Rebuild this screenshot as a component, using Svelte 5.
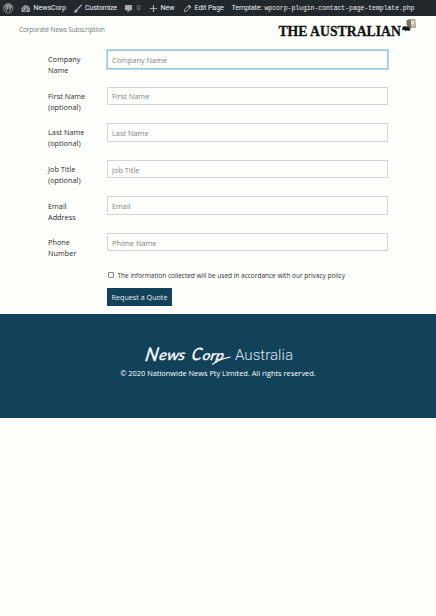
<script>
  const fields = [
    { label: ['Company', 'Name'], hint: 'Company Name', active: true },
    { label: ['First Name', '(optional)'], hint: 'First Name' },
    { label: ['Last Name', '(optional)'], hint: 'Last Name' },
    { label: ['Job Title', '(optional)'], hint: 'Job Title' },
    { label: ['Email', 'Address'], hint: 'Email' },
    { label: ['Phone', 'Number'], hint: 'Phone Name' }
  ];
</script>

<div class="page">
  <nav class="admin">
    <svg class="wp" viewBox="0 0 20 20" width="10.5" height="10.5">
      <circle cx="10" cy="10" r="9" fill="none" stroke="#a6abb0" stroke-width="1.4" />
      <path d="M2.8 7 L7 17.2 L10.2 9 L13.2 17 L16.8 6.5 C15.5 3.8 13 2.4 10 2.4 C7 2.4 4.5 3.8 3.2 6 Z" fill="#a6abb0" />
      <path d="M3.5 6.5h3.6M8.8 6.5h4M5.6 7l3.3 9.5M11 7l3.2 9" stroke="#23282d" stroke-width="1.3" />
    </svg>
    <a class="site" href="#site">
      <svg viewBox="0 0 20 20" width="9.5" height="9.5">
        <path d="M2.5 17 A9 9 0 1 1 17.5 17 Z" fill="#a6abb0" />
        <path d="M9.5 14 L14 7" stroke="#23282d" stroke-width="2" />
        <g fill="#23282d"><circle cx="4.5" cy="12" r="1.3" /><circle cx="6" cy="8" r="1.3" /><circle cx="10" cy="5.8" r="1.3" /><circle cx="15.7" cy="12" r="1.3" /><circle cx="9.5" cy="14" r="2" /></g>
      </svg>
      <span>NewsCorp</span>
    </a>
    <a class="customize" href="#customize">
      <svg viewBox="0 0 20 20" width="9.5" height="9.5" fill="#a6abb0">
        <path d="M18.6 1.2 C19.4 2 18.8 3.2 17.8 4.4 L11.2 11.8 L8.6 9.4 L15.6 2.4 C16.8 1.2 17.9 .6 18.6 1.2Z" />
        <path d="M7.8 10.4 L10.2 12.7 C10.5 16.5 7 19 1 18 C4.2 16.8 3 11 7.8 10.4Z" />
      </svg>
      <span>Customize</span>
    </a>
    <a class="comments" href="#comments">
      <svg viewBox="0 0 20 20" width="9" height="9"><path d="M4 2h12q2 0 2 2v8q0 2-2 2h-3l-5 5v-5H4q-2 0-2-2V4q0-2 2-2Z" fill="#a6abb0" /></svg>
      <span>0</span>
    </a>
    <a class="new" href="#new">
      <svg viewBox="0 0 20 20" width="9" height="9"><path d="M10 2v16M2 10h16" stroke="#a6abb0" stroke-width="2.6" /></svg>
      <span>New</span>
    </a>
    <a class="edit" href="#edit">
      <svg viewBox="0 0 20 20" width="9" height="9"><path d="M3 17l1.3-5.4L13.5 2.4l4.1 4.1-9.2 9.2ZM11 5l4 4" fill="none" stroke="#a6abb0" stroke-width="2" /><path d="M13.5 2.4l4.1 4.1-2.3 2.3-4.1-4.1Z" fill="#a6abb0" /></svg>
      <span>Edit Page</span>
    </a>
    <span class="tpl">Template:</span>
    <code>wpcorp-plugin-contact-page-template.php</code>
  </nav>

  <header>
    <span class="tag">Corporate News Subscription</span>
    <svg class="brand" viewBox="0 0 142 24" width="142" height="24">
      <text x="2.4" y="17.8" textLength="122.5" lengthAdjust="spacingAndGlyphs">THE AUSTRALIAN</text>
      <path d="M132.5 1.5h6.5l.5 8h-7Z" fill="#c9c7a4" stroke="#777a70" stroke-width=".6" />
      <path d="M130.5 2h4.5v5h-4.5Z" fill="#77746e" />
      <path d="M135 3h3v3h-3Z" fill="#e6e5b9" />
      <path d="M126.3 9.5l2.2-1.5 2 .7 1.7-1.5 1.8 3 .7 1.2-2 1.5-1.8-.6-1.2 1.3-1-1.5-2.4.2Z" fill="#161616" />
      <path d="M131.5 7l4 .5-1 2.5-3-.5Z" fill="#665961" />
    </svg>
  </header>

  <form>
    {#each fields as field}
      <div class="row">
        <label for={field.hint}>{field.label[0]}<br />{field.label[1]}</label>
        <input id={field.hint} class:active={field.active} placeholder={field.hint} />
      </div>
    {/each}
    <div class="consent"><i></i><span>The information collected will be used in accordance with our privacy policy</span></div>
    <button type="button"><span>Request a Quote</span></button>
  </form>

  <footer>
    <svg viewBox="0 0 156 28" width="156" height="28">
      <g transform="translate(3.5 0) skewX(-10)">
        <text class="script" x="4.5" y="20" font-size="19" textLength="13" lengthAdjust="spacingAndGlyphs">N</text>
        <text class="script" x="18.5" y="19.3" font-size="14.5" textLength="26" lengthAdjust="spacingAndGlyphs">ews</text>
        <text class="script" x="51" y="19.3" font-size="17" textLength="10" lengthAdjust="spacingAndGlyphs">C</text>
        <text class="script" x="62" y="19.1" font-size="13.5" textLength="21" lengthAdjust="spacingAndGlyphs">orp</text>
      </g>
      <path d="M72.5 23.2 Q80 18 90 16.2" fill="none" stroke="#fff" stroke-width="1.2" stroke-linecap="round" />
      <text class="country" x="95" y="19.3" textLength="58" lengthAdjust="spacingAndGlyphs">Australia</text>
    </svg>
    <p>© 2020 Nationwide News Pty Limited. All rights reserved.</p>
  </footer>
</div>

<style>
  :global(body) { margin: 0; background: #fefffb; }
  .page { width: 436px; height: 616px; overflow: hidden; background: #fefffb; font: 7.3px/11px "Open Sans", "Noto Sans", sans-serif; color: #303234; }
  .admin { height: 15.5px; background: #23282d; display: flex; align-items: center; color: #eceeef; font: 7.1px/16px Roboto, sans-serif; white-space: nowrap; padding: 1px 0 0 3px; box-sizing: border-box; }
  .admin svg { flex: none; }
  .admin a { display: flex; align-items: center; color: inherit; text-decoration: none; flex: none; box-sizing: border-box; }
  .admin .wp { margin-right: 7.5px; }
  .admin .site { width: 51.5px; gap: 3px; }
  .admin .customize { width: 51.5px; gap: 3px; }
  .admin .comments { width: 24.5px; gap: 3.5px; color: #8b9095; }
  .admin .new { width: 34.5px; gap: 3px; }
  .admin .edit { width: 48.5px; gap: 2.5px; }
  .site span, .edit span, .new span, .tpl { letter-spacing: -.06px; }
  .customize span { letter-spacing: -.2px; }
  .tpl { width: 33px; flex: none; }
  code { font: 6.45px/16px "Liberation Mono", monospace; letter-spacing: -.02px; padding-top: 1px; }
  header { height: 28px; box-sizing: border-box; padding: 2px 18px 0 19px; display: flex; justify-content: space-between; }
  .tag { font-size: 6.6px; line-height: 24px; letter-spacing: -.16px; color: #777a7a; }
  .brand text { font: bold 15.5px "Liberation Serif", serif; fill: #111; stroke: #111; stroke-width: .3px; }
  form { height: 270.5px; box-sizing: border-box; padding: 6.5px 48px 0; }
  .row { height: 36.6px; display: flex; align-items: flex-start; }
  label { width: 59px; flex: none; padding-top: 4.3px; color: #292b2c; letter-spacing: .02px; }
  input { width: 281px; height: 18.5px; box-sizing: border-box; border: 1px solid #d3d6d4; border-radius: 0; padding: 1px 4px 0; margin: 0; background: #fefffb; font: 7.3px "Open Sans", "Noto Sans", sans-serif; letter-spacing: .03px; color: #555; outline: none; }
  input::placeholder { color: #7c7f7e; opacity: 1; }
  input.active { border-color: #9acbdc; box-shadow: 0 0 0 1px #b2dce7; }
  .consent { display: flex; align-items: center; height: 11px; padding: 0 0 0 59.5px; font-size: 6.6px; letter-spacing: -.05px; gap: 3.5px; white-space: nowrap; color: #303234; }
  .consent i { width: 6.5px; height: 6.5px; box-sizing: border-box; border: 1px solid #85898a; border-radius: 1px; background: #fff; flex: none; }
  button { display: block; width: 65px; height: 18px; margin: 7.5px 0 0 59px; padding: 0; border: 0; background: #12415a; color: #e6eef0; font: 7.2px/18px "Open Sans", "Noto Sans", sans-serif; white-space: nowrap; }
  footer { height: 104px; box-sizing: border-box; padding-top: 27px; background: #12415a; color: #fff; text-align: center; }
  footer svg { display: block; margin: 0 auto; }
  .script { font-family: Lato, sans-serif; font-style: italic; fill: #fff; stroke: #fff; stroke-width: .3px; }
  .country { font: 300 15px Roboto, sans-serif; fill: #dce9ee; }
  footer p { margin: -1.5px 0 0; font-size: 7.4px; line-height: 11px; white-space: nowrap; }
</style>
